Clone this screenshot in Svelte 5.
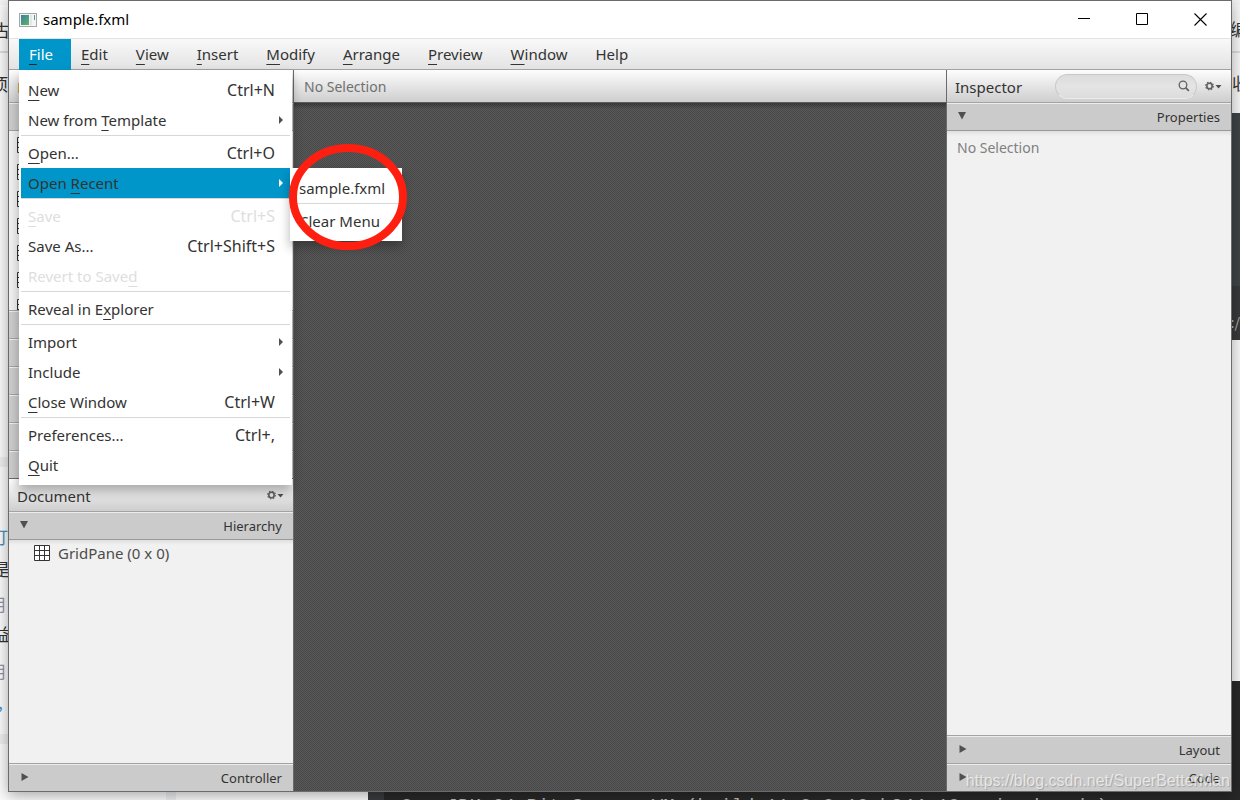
<script>
  // "_" marks the mnemonic letter that follows it
  const menus = ['_File', '_Edit', '_View', '_Insert', '_Modify', '_Arrange', '_Preview', '_Window', 'Help'];

  const fileMenu = [
    { label: '_New', keys: 'Ctrl+N' },
    { label: 'New from _Template', arrow: true },
    { sep: true },
    { label: '_Open...', keys: 'Ctrl+O' },
    { label: 'Open _Recent', arrow: true, recent: true },
    { sep: true },
    { label: '_Save', keys: 'Ctrl+S', disabled: true },
    { label: 'Save As...', keys: 'Ctrl+Shift+S' },
    { label: 'Revert to Save_d', disabled: true },
    { sep: true },
    { label: 'Reveal in E_xplorer' },
    { sep: true },
    { label: 'Import', arrow: true },
    { label: 'Include', arrow: true },
    { label: '_Close Window', keys: 'Ctrl+W' },
    { sep: true },
    { label: 'Preferences...', keys: 'Ctrl+,' },
    { label: '_Quit' },
  ];

  let openMenu = $state('_File');
  let recentOpen = $state(true);

  function toggleMenu(name) {
    openMenu = openMenu === name ? '' : name;
  }

  function split(label) {
    const i = label.indexOf('_');
    if (i < 0) return [label, '', ''];
    return [label.slice(0, i), label[i + 1], label.slice(i + 2)];
  }
</script>

{#snippet mnemonic(label)}
  {@const p = split(label)}
  <span class="label">{p[0]}{#if p[1]}<span class="key">{p[1]}</span>{/if}{p[2]}</span>
{/snippet}

{#snippet gear()}
  <button class="gear" aria-label="Options">
    <svg width="17" height="10" viewBox="0 0 17 10">
      <circle cx="4.5" cy="5" r="2.7" fill="none" stroke="#606060" stroke-width="1.6" />
      <circle cx="4.5" cy="5" r="3.8" fill="none" stroke="#606060" stroke-width="1.2" stroke-dasharray="1.5 1.48" />
      <path d="M10.5 4h6l-3 3.6z" fill="#505050" />
    </svg>
  </button>
{/snippet}

{#snippet section(title, open)}
  <button class="section" aria-expanded={open}>
    <svg width="10" height="10" viewBox="0 0 10 10">
      {#if open}
        <path d="M1 1h8L5 8.500z" fill="#505050" />
      {:else}
        <path d="M2.500 1v8l7-4z" fill="#505050" />
      {/if}
    </svg>
    <span>{title}</span>
  </button>
{/snippet}

{#snippet gridIcon()}
  <svg width="16" height="16" viewBox="0 0 16 16">
    <path d="M.5 .5h15v15H.5zM.5 5.500h15M.5 10.500h15M5.500 .5v15M10.500 .5v15" fill="#fff" stroke="#333" />
  </svg>
{/snippet}

<div class="desktop">
  <!-- other windows peeking out behind -->
  <div class="behind" aria-hidden="true">
    <div class="page left"></div>
    <div class="page right"></div>
    <div class="gap g1"></div>
    <div class="gap g2"></div>
    <div class="gap g3"></div>
    <div class="rule"></div>
    <div class="ide"></div>
    <div class="console"></div>
    <div class="log">OpenJDK 64-Bit Server VM (build 11.0.8+10-b944.10, mixed mode)</div>
    <span class="scrap s1">古</span>
    <span class="scrap s2">项</span>
    <span class="scrap blue s3">打</span>
    <span class="scrap s4">是</span>
    <span class="scrap pale s5">用</span>
    <span class="scrap s6">益</span>
    <span class="scrap pale s7">用</span>
    <span class="scrap blue s8">,</span>
    <span class="scrap r1">编</span>
    <span class="scrap r2">收</span>
    <span class="scrap r3">:/</span>
  </div>

  <div class="window">
    <header class="titlebar">
      <svg width="18" height="14" viewBox="0 0 18 14">
        <defs>
          <linearGradient id="scr" x2="1" y2="1">
            <stop offset="0" stop-color="#3c7f9c" />
            <stop offset="1" stop-color="#5fb46c" />
          </linearGradient>
        </defs>
        <rect x=".5" y=".5" width="17" height="13" fill="#f4f4f4" stroke="#a5a8aa" />
        <rect x="2" y="2" width="8" height="10" fill="url(#scr)" />
        <path d="M11 2h2v10h-2z" fill="#e2e6e8" />
        <path d="M15 2h1v5h-1z" fill="#4f9f86" />
      </svg>
      <h1>sample.fxml</h1>
      <button class="ctl" aria-label="Minimize">
        <svg width="13" height="13" viewBox="0 0 13 13"><path d="M0 5.500h12" stroke="#000" /></svg>
      </button>
      <button class="ctl" aria-label="Maximize">
        <svg width="13" height="13" viewBox="0 0 13 13"><path d="M.5 .5h11v11H.5z" fill="none" stroke="#000" /></svg>
      </button>
      <button class="ctl" aria-label="Close">
        <svg width="13" height="13" viewBox="0 0 13 13"><path d="M.5 .5l12 12M12.500 .5l-12 12" stroke="#000" stroke-width="1.1" /></svg>
      </button>
    </header>

    <nav class="menubar">
      {#each menus as name}
        <div class="menu-holder">
          <button class="menu-title" class:active={openMenu === name} onclick={() => toggleMenu(name)}>
            {@render mnemonic(name)}
          </button>
          {#if name === '_File' && openMenu === name}
            <div class="menu file-menu">
              {#each fileMenu as item}
                {#if item.sep}
                  <div class="sep"></div>
                {:else}
                  <div class="item-holder">
                    <button
                      class="item"
                      class:selected={item.recent && recentOpen}
                      disabled={item.disabled}
                      onclick={() => (recentOpen = item.recent ? !recentOpen : false)}
                    >
                      {@render mnemonic(item.label)}
                      <span class="keys">{item.keys ?? ''}</span>
                      <span class="arrow">
                        {#if item.arrow}
                          <svg width="4" height="8" viewBox="0 0 4 8"><path d="M0 0l4 4-4 4z" fill="currentColor" /></svg>
                        {/if}
                      </span>
                    </button>
                    {#if item.recent && recentOpen}
                      <div class="menu submenu">
                        <button class="item">sample.fxml</button>
                        <div class="sep"></div>
                        <button class="item">Clear Menu</button>
                        <svg class="ring" width="120" height="108" viewBox="0 0 120 108">
                          <ellipse cx="59" cy="54" rx="55" ry="49" fill="none" stroke="#ff1f10" stroke-width="8" />
                        </svg>
                      </div>
                    {/if}
                  </div>
                {/if}
              {/each}
            </div>
          {/if}
        </div>
      {/each}
    </nav>

    <main class="body">
      <aside class="side side-left">
        <div class="head"><h2 class="library">Library</h2></div>
        {@render section('Containers', true)}
        <ul class="list">
          {#each Array(7) as _}
            <li>{@render gridIcon()}</li>
          {/each}
        </ul>
        {#each ['Controls', 'Gluon', 'Menu', 'Miscellaneous', 'Shapes', 'Charts'] as title}
          {@render section(title, false)}
        {/each}
        <div class="head doc">
          <h2>Document</h2>
          {@render gear()}
        </div>
        {@render section('Hierarchy', true)}
        <div class="content tree">
          <div class="node">{@render gridIcon()}<span>GridPane (0 x 0)</span></div>
        </div>
        {@render section('Controller', false)}
      </aside>

      <section class="center">
        <div class="head path">No Selection</div>
        <div class="canvas"></div>
      </section>

      <aside class="side side-right">
        <div class="head">
          <h2>Inspector</h2>
          <label class="search">
            <input type="text" aria-label="Search properties" />
            <svg width="12" height="12" viewBox="0 0 12 12">
              <circle cx="5" cy="5" r="3.800" fill="none" stroke="#606060" stroke-width="1.300" />
              <path d="M7.800 7.800l3 3" stroke="#606060" stroke-width="1.800" />
            </svg>
          </label>
          {@render gear()}
        </div>
        {@render section('Properties', true)}
        <div class="content empty">No Selection</div>
        {@render section('Layout', false)}
        {@render section('Code', false)}
      </aside>
    </main>
  </div>

  <div class="watermark">https://blog.csdn.net/SuperBetterMan</div>
</div>

<style>
  :global(body) {
    margin: 0;
    font-family: "Noto Sans", "Noto Sans CJK SC", sans-serif;
    font-size: 15px;
    color: #333;
  }

  button {
    font: inherit;
    color: inherit;
    border: 0;
    padding: 0;
    background: none;
    text-align: left;
  }

  h1, h2 {
    margin: 0;
    font-size: 15px;
    font-weight: 400;
  }

  svg {
    display: block;
    flex: none;
  }

  .desktop {
    position: relative;
    box-sizing: border-box;
    height: 100vh;
    padding: 0 8px 8px;
    overflow: hidden;
    background: #f4f4f5;
  }

  /* background windows */
  .behind > * {
    position: absolute;
  }

  .page.left {
    left: 0;
    top: 5px;
    width: 368px;
    bottom: 0;
    background: #fbfbfb;
  }

  .page.right {
    right: 0;
    top: 5px;
    width: 368px;
    bottom: 0;
    background: #f8f8f8;
  }

  .gap {
    background: #eceef0;
  }

  .g1 { left: 0; width: 20px; top: 457px; height: 10px; }
  .g2 { left: 0; width: 20px; top: 734px; height: 10px; }
  .g3 { left: 166px; width: 10px; top: 744px; bottom: 0; }

  .rule {
    left: 0;
    right: 0;
    top: 51px;
    height: 2px;
    background: #dcdce2;
  }

  .ide {
    right: 0;
    width: 20px;
    top: 113px;
    height: 227px;
    background: linear-gradient(#3f4447 173px, #38393a 173px);
  }

  .console {
    left: 368px;
    right: 0;
    top: 681px;
    bottom: 0;
    background: linear-gradient(90deg, #393c3e 16px, #282828 16px);
  }

  .log {
    left: 401px;
    top: 794px;
    font: 19px/24px "Liberation Mono", monospace;
    color: #bbb;
    white-space: nowrap;
  }

  .scrap {
    font-family: "Noto Sans CJK SC", sans-serif;
    font-size: 17px;
    line-height: 24px;
  }

  .blue { color: #4a8fc0; }
  .pale { color: #9292a5; }

  .s1 { left: -7px; top: 18px; }
  .s2 { left: -9px; top: 72px; }
  .s3 { left: -9px; top: 525px; }
  .s4 { left: -7px; top: 557px; }
  .s5 { left: -11px; top: 592px; }
  .s6 { left: -7px; top: 622px; }
  .s7 { left: -11px; top: 659px; }
  .s8 { left: -2px; top: 690px; }
  .r1 { right: -7px; top: 17px; }
  .r2 { right: -9px; top: 71px; }
  .r3 { right: 0; top: 310px; color: #bbb; font-size: 14px; }

  .window {
    position: relative;
    box-sizing: border-box;
    height: 100%;
    display: flex;
    flex-direction: column;
    border: 1px solid #6b6b6b;
    background: #f1f1f1;
    box-shadow: 0 3px 14px rgba(0, 0, 0, 0.35);
  }

  .titlebar {
    display: flex;
    align-items: center;
    height: 37px;
    padding: 0 2px 0 10px;
    background: #fff;
  }

  .titlebar h1 {
    flex: 1;
    margin-left: 6px;
    padding-bottom: 2px;
    color: #000;
  }

  .ctl {
    width: 58px;
    height: 36px;
    display: flex;
    align-items: center;
    justify-content: center;
  }

  .menubar {
    display: flex;
    height: 30px;
    padding: 0 10px;
    border-top: 1px solid #e3e3e3;
    border-bottom: 1px solid #a3a3a3;
    background: linear-gradient(#f9f9f9, #e3e3e3);
  }

  .menu-title {
    height: 31px;
    padding: 0 18px 2px 10px;
  }

  .menu-holder, .item-holder {
    position: relative;
  }

  .menu-title.active {
    background: #0096c9;
    color: #fff;
  }

  .key {
    text-decoration: underline;
    text-decoration-thickness: 1px;
    text-underline-offset: 4px;
    text-decoration-skip-ink: none;
  }

  .active .key {
    text-decoration-color: #222;
  }

  .menu {
    position: absolute;
    z-index: 2;
    box-sizing: border-box;
    padding: 5px 2px;
    background: #fff;
    box-shadow: 0 6px 10px rgba(0, 0, 0, 0.3);
  }

  .file-menu {
    left: 0;
    top: 31px;
    width: 273px;
  }

  .submenu {
    left: 100%;
    top: 0;
    width: 112px;
  }

  .item {
    display: flex;
    align-items: center;
    width: 100%;
    height: 30px;
    padding: 0 7px;
    white-space: nowrap;
  }

  .item:disabled {
    color: #dedede;
  }

  .item.selected {
    background: #0096c9;
  }

  .keys {
    margin-left: auto;
    font-size: 16px;
  }

  .arrow {
    width: 4px;
    margin-left: 4px;
    color: #505050;
  }

  .selected .arrow {
    color: #fff;
  }

  .sep {
    height: 2px;
    border-top: 1px solid #d8d8d8;
  }

  .ring {
    position: absolute;
    left: -1px;
    top: -25px;
    pointer-events: none;
  }

  .body {
    flex: 1;
    min-height: 0;
    display: flex;
  }

  .side {
    flex: none;
    width: 284px;
    display: flex;
    flex-direction: column;
  }

  .side-left { border-right: 1px solid #6b6b6b; }
  .side-right { border-left: 1px solid #6b6b6b; }

  .head {
    flex: none;
    box-sizing: border-box;
    display: flex;
    align-items: center;
    height: 32px;
    padding: 2px 9px 0 8px;
    background: linear-gradient(#fdfdfd, #cecece);
  }

  .head h2 {
    flex: 1;
  }

  .head .library {
    color: #c77a26;
  }

  .doc {
    height: 33px;
    border-top: 1px solid #6b6b6b;
  }

  .gear {
    padding-bottom: 2px;
  }

  .section {
    flex: none;
    box-sizing: border-box;
    display: flex;
    align-items: center;
    justify-content: space-between;
    height: 28px;
    padding: 1px 11px 0 10px;
    border-top: 1px solid #a3a3a3;
    background: #cbcbcb;
    box-shadow: inset 0 1px #ececec;
    font-size: 13px;
  }

  .section svg {
    margin-bottom: 2px;
  }

  .list {
    height: 180px;
    box-sizing: border-box;
    margin: 0;
    padding: 6px 8px 0;
    overflow: hidden;
    list-style: none;
    border-top: 1px solid #a0a0a0;
  }

  .list li {
    height: 27px;
  }

  .content {
    flex: 1;
    border-top: 1px solid #999;
    background: linear-gradient(#dfdfdf, #f1f1f1 5px);
  }

  .node {
    display: flex;
    align-items: center;
    gap: 8px;
    height: 26px;
    padding: 0 25px;
    color: #4c4c4c;
  }

  .empty {
    padding: 7px 10px;
    font-size: 14px;
    color: #808080;
  }

  .center {
    flex: 1;
    min-width: 0;
    display: flex;
    flex-direction: column;
  }

  .path {
    padding: 0 10px;
    font-size: 14px;
    color: #707070;
  }

  .canvas {
    flex: 1;
    border-top: 1px solid #5c5c5c;
    background: linear-gradient(rgba(0, 0, 0, 0.3), transparent 6px), repeating-conic-gradient(#494949 0 25%, #585858 0 50%) 0 0 / 2px 2px;
  }

  .search {
    box-sizing: border-box;
    display: flex;
    align-items: center;
    width: 142px;
    height: 25px;
    margin: 0 8px 2px 0;
    padding: 0 6px 0 12px;
    border: 1px solid #c8c8c8;
    border-bottom-color: #ececec;
    border-radius: 13px;
    background: linear-gradient(#dcdcdc, #e4e4e4 50%, #dcdcdc);
  }

  .search input {
    flex: 1;
    min-width: 0;
    border: 0;
    padding: 0;
    outline: 0;
    background: none;
    font: inherit;
  }

  .watermark {
    position: absolute;
    right: 10px;
    bottom: 9px;
    font: 16px/20px "Liberation Sans", sans-serif;
    color: rgba(255, 255, 255, 0.65);
    text-shadow: 1px 1px 1px rgba(0, 0, 0, 0.2);
    pointer-events: none;
  }
</style>
